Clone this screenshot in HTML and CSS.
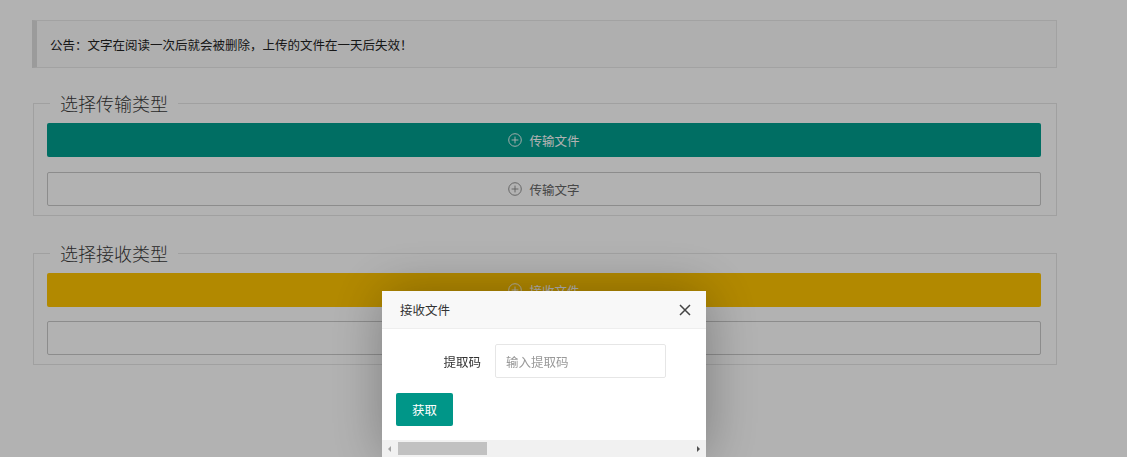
FILE: index.html
```html
<!DOCTYPE html>
<html lang="zh-CN">
<head>
    <meta charset="UTF-8">
    <title>文件传输</title>
    <link rel="stylesheet" href="styles.css">
</head>
<body>
    <div class="page">
        <!-- 公告 -->
        <div class="notice">公告：文字在阅读一次后就会被删除，上传的文件在一天后失效！</div>

        <fieldset class="group">
            <legend>选择传输类型</legend>
            <button class="btn btn-green">
                <svg class="icon" viewBox="0 0 14 14"><circle cx="7" cy="7" r="6.3"/><path d="M7 3.6v6.8M3.6 7h6.8"/></svg>
                传输文件
            </button>
            <button class="btn btn-plain">
                <svg class="icon" viewBox="0 0 14 14"><circle cx="7" cy="7" r="6.3"/><path d="M7 3.6v6.8M3.6 7h6.8"/></svg>
                传输文字
            </button>
        </fieldset>

        <fieldset class="group group-second">
            <legend>选择接收类型</legend>
            <button class="btn btn-yellow">
                <svg class="icon" viewBox="0 0 14 14"><circle cx="7" cy="7" r="6.3"/><path d="M7 3.6v6.8M3.6 7h6.8"/></svg>
                接收文件
            </button>
            <button class="btn btn-plain btn-low">
                <svg class="icon" viewBox="0 0 14 14"><circle cx="7" cy="7" r="6.3"/><path d="M7 3.6v6.8M3.6 7h6.8"/></svg>
                接收文字
            </button>
        </fieldset>
    </div>

    <!-- 遮罩 + 弹窗 -->
    <div class="shade"></div>
    <div class="dialog">
        <div class="dialog-title">
            <span>接收文件</span>
            <svg class="close" viewBox="0 0 12 12"><path d="M1 1l10 10M11 1L1 11"/></svg>
        </div>
        <div class="dialog-body">
            <div class="form-row">
                <label class="form-label" for="code">提取码</label>
                <input class="form-input" id="code" type="text" placeholder="输入提取码">
            </div>
            <button class="btn-get">获取</button>
        </div>
        <div class="hscroll">
            <span class="arrow arrow-left"></span>
            <div class="hscroll-track"><div class="hscroll-thumb"></div></div>
            <span class="arrow arrow-right"></span>
        </div>
    </div>
</body>
</html>
```

FILE: styles.css
```css
/* Base */
* {
    box-sizing: border-box;
}

body {
    margin: 0;
    background: #fff;
    color: #333;
    font-family: "Noto Sans CJK SC", "Noto Sans", sans-serif;
    font-size: 12.5px;
    overflow: hidden;
}

.page {
    width: 1057px;
    padding: 20px 0 0 32px;
}

/* Notice */
.notice {
    height: 48px;
    line-height: 48px;
    padding-left: 13px;
    background: #fbfbfb;
    border-left: 5px solid #dedede;
    border-top: 1px solid #e8e8e8;
    border-bottom: 1px solid #e8e8e8;
    border-right: 1px solid #e8e8e8;
    color: #222;
}

/* Groups */
.group {
    margin: 25px 0 0 1px;
    padding: 10px 15px 9px 13px;
    border: 1px solid #e6e6e6;
    min-inline-size: auto;
}

.group-second {
    margin-top: 27px;
}

.group legend {
    margin-left: 3px;
    padding: 0 10px;
    font-size: 18px;
    line-height: 20px;
    color: #3a3a3a;
    font-weight: 300;
}

.btn {
    display: flex;
    align-items: center;
    justify-content: center;
    gap: 7px;
    width: 100%;
    height: 34px;
    border-radius: 2px;
    font-family: inherit;
    font-size: 12.5px;
    cursor: pointer;
}

.btn + .btn {
    margin-top: 15px;
}

.btn-low {
    margin-top: 14px !important;
}

.btn-green {
    background: #009e8e;
    border: 0;
    color: #fff;
}

.btn-yellow {
    background: #ffc400;
    border: 0;
    color: #fff;
}

.btn-plain {
    background: #fff;
    border: 1px solid #c9c9c9;
    color: #666;
}

.btn-plain .icon {
    stroke: #888;
}

.icon {
    width: 14px;
    height: 14px;
    fill: none;
    stroke: currentColor;
    stroke-width: 0.9;
}

/* Shade */
.shade {
    position: fixed;
    inset: 0;
    background: rgba(0, 0, 0, 0.3);
}

/* Dialog */
.dialog {
    position: fixed;
    left: 382px;
    top: 291px;
    width: 324px;
    height: 166px;
    background: #fff;
    box-shadow: 1px 1px 50px rgba(0, 0, 0, 0.3);
    display: flex;
    flex-direction: column;
}

.dialog-title {
    height: 38px;
    flex: none;
    display: flex;
    align-items: center;
    justify-content: space-between;
    padding: 0 15px 0 18px;
    background: #f8f8f8;
    border-bottom: 1px solid #eee;
    color: #333;
}

.close {
    width: 12px;
    height: 12px;
    fill: none;
    stroke: #444;
    stroke-width: 1.5;
}

.dialog-body {
    flex: 1;
    padding: 15px 14px 0;
}

.form-row {
    display: flex;
    align-items: center;
}

.form-label {
    width: 85px;
    margin-right: 14px;
    text-align: right;
    color: #333;
}

.form-input {
    width: 171px;
    height: 34px;
    padding: 0 10px;
    border: 1px solid #e6e6e6;
    border-radius: 2px;
    font-family: inherit;
    font-size: 12.5px;
    color: #333;
    outline: none;
}

.form-input::placeholder {
    color: #999;
}

.btn-get {
    margin-top: 15px;
    width: 57px;
    height: 33px;
    border: 0;
    border-radius: 2px;
    background: #009688;
    color: #fff;
    font-family: inherit;
    font-size: 12.5px;
}

/* Fake horizontal scrollbar */
.hscroll {
    height: 17px;
    flex: none;
    display: flex;
    align-items: center;
    background: #f1f1f1;
}

.hscroll-track {
    flex: 1;
    height: 100%;
    padding: 2px 0;
}

.hscroll-thumb {
    margin-left: 1px;
    width: 89px;
    height: 100%;
    background: #c1c1c1;
}

.arrow {
    width: 15px;
    height: 17px;
    display: flex;
    align-items: center;
    justify-content: center;
}

.arrow::before {
    content: "";
    border-top: 3px solid transparent;
    border-bottom: 3px solid transparent;
}

.arrow-left::before {
    border-right: 3px solid #a3a3a3;
}

.arrow-right::before {
    border-left: 3px solid #505050;
}
```
